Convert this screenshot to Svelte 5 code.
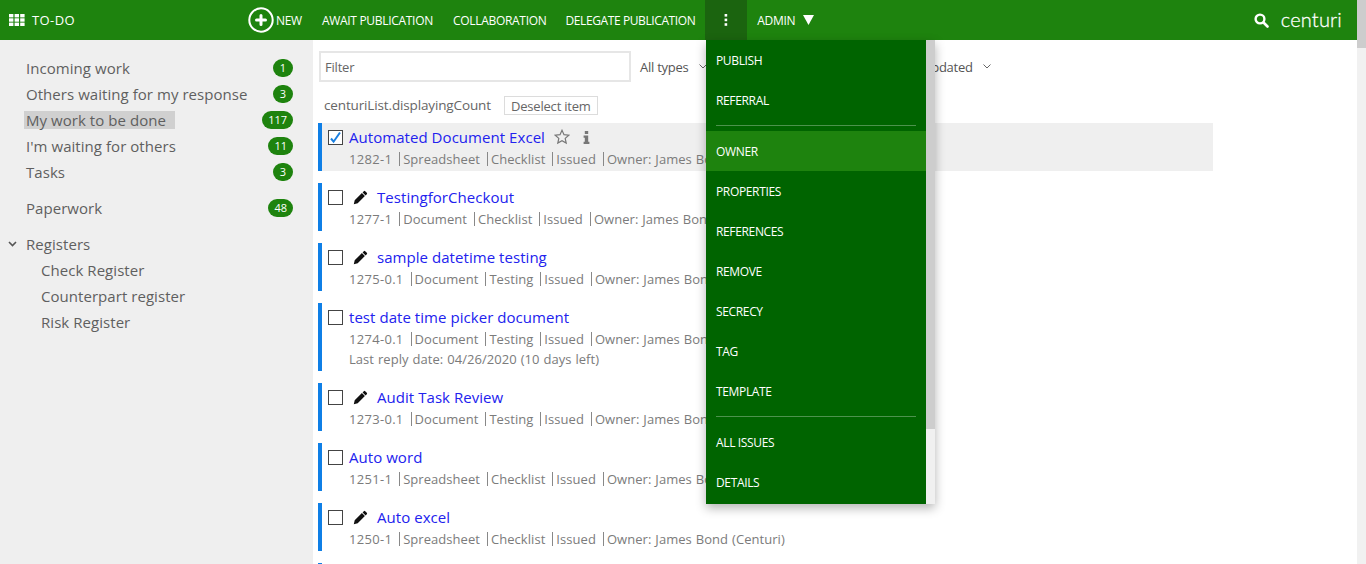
<script>
  const navTop = [
    { label: "Incoming work", count: 1 },
    { label: "Others waiting for my response", count: 3 },
    { label: "My work to be done", count: 117, active: true },
    { label: "I'm waiting for others", count: 11 },
    { label: "Tasks", count: 3 }
  ];
  const registers = ["Check Register", "Counterpart register", "Risk Register"];

  const items = [
    { title: "Automated Document Excel", id: "1282-1", type: "Spreadsheet", kind: "Checklist", selected: true },
    { title: "TestingforCheckout", id: "1277-1", type: "Document", kind: "Checklist", edit: true },
    { title: "sample datetime testing", id: "1275-0.1", type: "Document", kind: "Testing", edit: true },
    { title: "test date time picker document", id: "1274-0.1", type: "Document", kind: "Testing", reply: "Last reply date: 04/26/2020 (10 days left)" },
    { title: "Audit Task Review", id: "1273-0.1", type: "Document", kind: "Testing", edit: true },
    { title: "Auto word", id: "1251-1", type: "Spreadsheet", kind: "Checklist" },
    { title: "Auto excel", id: "1250-1", type: "Spreadsheet", kind: "Checklist", edit: true }
  ];

  const menuGroups = [
    ["PUBLISH", "REFERRAL"],
    ["OWNER", "PROPERTIES", "REFERENCES", "REMOVE", "SECRECY", "TAG", "TEMPLATE"],
    ["ALL ISSUES", "DETAILS"]
  ];
</script>

<div class="page">
  <header class="topbar">
    <div class="brand">
      <svg class="grid-icon" width="16" height="12" viewBox="0 0 16 12" fill="#fff">
        <rect x="0" y="0" width="4.4" height="3.4" /><rect x="5.6" y="0" width="4.4" height="3.4" /><rect x="11.2" y="0" width="4.4" height="3.4" />
        <rect x="0" y="4.3" width="4.4" height="3.4" /><rect x="5.6" y="4.3" width="4.4" height="3.4" /><rect x="11.2" y="4.3" width="4.4" height="3.4" />
        <rect x="0" y="8.6" width="4.4" height="3.4" /><rect x="5.6" y="8.6" width="4.4" height="3.4" /><rect x="11.2" y="8.6" width="4.4" height="3.4" />
      </svg>
      <span>TO-DO</span>
    </div>
    <div class="new">
      <svg width="26" height="26" viewBox="0 0 26 26">
        <circle cx="13" cy="13" r="11.7" fill="none" stroke="#fff" stroke-width="2" />
        <path d="M13 8.500v9M8.500 13h9" stroke="#fff" stroke-width="3" stroke-linecap="round" />
      </svg>
      <span>NEW</span>
    </div>
    <span class="nav-link">AWAIT PUBLICATION</span>
    <span class="nav-link">COLLABORATION</span>
    <span class="nav-link tight">DELEGATE PUBLICATION</span>
    <div class="kebab">
      <svg width="4" height="12" viewBox="0 0 4 12" fill="#fff"><rect x="0.6" y="0" width="2.6" height="2.6" /><rect x="0.6" y="4.6" width="2.6" height="2.6" /><rect x="0.6" y="9.2" width="2.6" height="2.6" /></svg>
    </div>
    <div class="admin">
      <span>ADMIN</span>
      <svg width="11" height="10" viewBox="0 0 11 10" fill="#fff"><path d="M0 0h11L5.500 10z" /></svg>
    </div>
    <div class="logo-area">
      <svg width="15" height="15" viewBox="0 0 15 15" fill="none" stroke="#fff">
        <circle cx="6" cy="6" r="4.4" stroke-width="2.4" />
        <path d="M9.500 9.500l4 4" stroke-width="2.6" stroke-linecap="round" />
      </svg>
      <span class="logo">centuri</span>
    </div>
  </header>

  <div class="body">
    <aside class="sidebar">
      <ul class="nav">
        {#each navTop as n}
          <li class="nav-row">
            <span class="nav-label" class:active={n.active}>{n.label}</span>
            <span class="badge">{n.count}</span>
          </li>
        {/each}
      </ul>
      <div class="nav-row paperwork">
        <span class="nav-label">Paperwork</span>
        <span class="badge">48</span>
      </div>
      <div class="nav-row registers">
        <svg class="chev" width="9" height="6" viewBox="0 0 9 6" fill="none" stroke="#555" stroke-width="1.6"><path d="M1 1l3.500 3.500L8 1" /></svg>
        <span class="nav-label">Registers</span>
      </div>
      {#each registers as r}
        <div class="nav-row sub"><span class="nav-label">{r}</span></div>
      {/each}
    </aside>

    <main class="content">
      <div class="toolbar">
        <input class="filter" type="text" placeholder="Filter" />
        <span class="select">All types
          <svg width="8" height="5" viewBox="0 0 8 5" fill="none" stroke="#666"><path d="M.5.5L4 4 7.500.5" /></svg>
        </span>
        <span class="select sort">Last updated
          <svg width="8" height="5" viewBox="0 0 8 5" fill="none" stroke="#666"><path d="M.5.5L4 4 7.500.5" /></svg>
        </span>
      </div>
      <div class="count-row">
        <span>centuriList.displayingCount</span>
        <button class="deselect">Deselect item</button>
      </div>

      <div class="list">
        {#each items as item}
          <div class="item" class:selected={item.selected}>
            <div class="title-row">
              <span class="check">
                {#if item.selected}
                  <svg width="13" height="13" viewBox="0 0 13 13" fill="none" stroke="#1a7fe0" stroke-width="2"><path d="M2 7.500l2.600 3.200L11 1.500" /></svg>
                {/if}
              </span>
              {#if item.edit}
                <svg class="pencil" width="15" height="15" viewBox="0 0 15 15" fill="#111">
                  <path d="M10.800 1.200a1 1 0 0 1 1.400 0l1.600 1.600a1 1 0 0 1 0 1.400l-1.200 1.200-3-3zM8.900 3.100l3 3-7.200 7.200L.8 14.200l.9-3.900z" />
                </svg>
              {/if}
              <span class="title">{item.title}</span>
              {#if item.selected}
                <svg class="star" width="16" height="16" viewBox="0 0 16 16" fill="none" stroke="#777" stroke-width="1.2"><path d="M8 1.300l2 4.400 4.800.5-3.600 3.200 1 4.700L8 11.700l-4.200 2.400 1-4.700L1.200 6.200l4.800-.5z" /></svg>
                <svg class="info" width="7" height="13" viewBox="0 0 7 13" fill="#777"><rect x="1.800" y="0" width="3.400" height="3" /><path d="M.6 4.600h4.600v6.200h1.200V13H.6v-2.200h1.200V6.800H.6z" /></svg>
              {/if}
            </div>
            <div class="meta">
              <span class="id">{item.id}</span><span class="sep">{item.type}</span><span class="sep">{item.kind}</span><span class="sep">Issued</span><span class="sep">Owner: James Bond (Centuri)</span>
            </div>
            {#if item.reply}
              <div class="meta">{item.reply}</div>
            {/if}
          </div>
        {/each}
        <div class="item"></div>
      </div>
    </main>
  </div>

  <div class="menu">
    <div class="menu-list">
      {#each menuGroups as group, g}
        {#if g > 0}<div class="divider"></div>{/if}
        {#each group as entry}
          <div class="menu-item" class:hover={entry === "OWNER"}>{entry}</div>
        {/each}
      {/each}
    </div>
    <div class="menu-scroll"><div class="menu-thumb"></div></div>
  </div>

  <div class="page-scroll"><div class="page-thumb"></div></div>
</div>

<style>
  :global(body) {
    margin: 0;
    background: #fff;
    font-family: "Open Sans", "Noto Sans", sans-serif;
  }
  .page {
    position: relative;
    height: 564px;
    overflow: hidden;
  }
  .topbar {
    display: flex;
    align-items: center;
    height: 40px;
    background: #1e830e;
    color: #fff;
    font-size: 12px;
    font-weight: 500;
    letter-spacing: -0.3px;
  }
  .brand {
    display: flex;
    align-items: center;
    width: 248px;
    padding-left: 9px;
    box-sizing: border-box;
    gap: 7px;
    font-size: 13px;
    letter-spacing: 0.4px;
  }
  .new {
    display: flex;
    align-items: center;
    gap: 2px;
  }
  .nav-link {
    margin-left: 20px;
  }
  .nav-link.tight {
    margin-left: 19px;
    letter-spacing: -0.4px;
  }
  .kebab {
    display: flex;
    align-items: center;
    justify-content: center;
    width: 42px;
    height: 40px;
    margin-left: 10px;
    background: #1b640f;
  }
  .admin {
    display: flex;
    align-items: center;
    gap: 8px;
    margin-left: 10px;
  }
  .logo-area {
    display: flex;
    align-items: center;
    gap: 12px;
    margin-left: auto;
    margin-right: 24px;
  }
  .logo {
    font-family: Lato, sans-serif;
    font-size: 20px;
    font-weight: 300;
    letter-spacing: 0.2px;
    line-height: 20px;
    padding-bottom: 3px;
    -webkit-text-stroke: 0.3px #fff;
  }
  .body {
    display: flex;
    height: 524px;
  }
  .sidebar {
    width: 313px;
    flex: none;
    background: #efefef;
    padding-top: 15px;
    box-sizing: border-box;
    color: #5f5f5f;
    font-size: 15px;
    letter-spacing: 0.05px;
  }
  .nav {
    list-style: none;
    margin: 0;
    padding: 0;
  }
  .nav-row {
    display: flex;
    align-items: center;
    justify-content: space-between;
    height: 26px;
    padding-left: 26px;
    padding-right: 20px;
  }
  .nav-label {
    line-height: 18px;
  }
  .nav-label.active {
    background: #d0d0d0;
    margin-left: -2px;
    padding: 0 9px 0 2px;
  }
  .badge {
    min-width: 20px;
    height: 18px;
    box-sizing: border-box;
    text-align: center;
    border-radius: 9px;
    background: #1e830e;
    color: #fff;
    font-size: 11px;
    line-height: 18px;
    letter-spacing: 0;
  }
  .nav li:nth-child(3) .badge,
  .nav li:nth-child(4) .badge,
  .paperwork .badge {
    padding: 0 6px;
  }
  .paperwork {
    margin-top: 10px;
  }
  .registers {
    position: relative;
    margin-top: 10px;
    justify-content: flex-start;
  }
  .chev {
    position: absolute;
    left: 8px;
    top: 10px;
  }
  .sub {
    padding-left: 41px;
  }
  .content {
    flex: 1;
    min-width: 0;
    padding: 11px 0 0 5px;
    color: #666;
    font-size: 13px;
  }
  .toolbar {
    display: flex;
    align-items: center;
    height: 31px;
  }
  .filter {
    width: 312px;
    height: 31px;
    box-sizing: border-box;
    margin-left: 1px;
    padding: 0 4px;
    border: 2px solid #e6e6e6;
    border-radius: 0;
    outline: none;
    font: inherit;
    letter-spacing: -0.2px;
    background: #fff;
  }
  .filter::placeholder {
    color: #666;
  }
  .select {
    display: inline-flex;
    align-items: center;
    gap: 10px;
    margin-left: 9px;
    color: #555;
    letter-spacing: -0.25px;
  }
  .select.sort {
    margin-left: 190px;
  }
  .count-row {
    display: flex;
    align-items: center;
    gap: 13px;
    height: 20px;
    margin-top: 13px;
    padding-left: 6px;
    font-size: 13.5px;
    letter-spacing: -0.14px;
  }
  .deselect {
    height: 19px;
    width: 94px;
    padding: 0;
    border: 1px solid #dcdcdc;
    background: #fff;
    color: #666;
    font: inherit;
    font-size: 13px;
    letter-spacing: -0.2px;
  }
  .list {
    display: flex;
    flex-direction: column;
    gap: 12px;
    margin-top: 8px;
    width: 895px;
  }
  .item {
    min-height: 48px;
    box-sizing: border-box;
    border-left: 4px solid #0f7fe6;
    padding: 1px 0 2px 6px;
  }
  .item.selected {
    background: #efefef;
  }
  .title-row {
    display: flex;
    align-items: center;
    height: 26px;
    margin-bottom: -1px;
  }
  .check {
    display: inline-flex;
    align-items: center;
    justify-content: center;
    width: 15px;
    height: 15px;
    box-sizing: border-box;
    border: 1px solid #444;
    background: #fff;
    flex: none;
    margin-right: 6px;
  }
  .pencil {
    margin: 0 9px 0 4px;
  }
  .title {
    color: #2222ee;
    font-size: 15px;
    letter-spacing: 0.05px;
  }
  .star {
    margin-left: 9px;
  }
  .info {
    margin-left: 13px;
  }
  .meta {
    display: flex;
    font-size: 13px;
    line-height: 20px;
    color: #7b7b7b;
    letter-spacing: 0.05px;
    word-spacing: 0.5px;
    padding-left: 21px;
  }
  .id {
    letter-spacing: 0.3px;
  }
  .sep {
    margin-left: 7px;
    padding-left: 3px;
    border-left: 1px solid #888;
    line-height: 14px;
    align-self: center;
  }
  .menu {
    position: absolute;
    left: 706px;
    top: 40px;
    display: flex;
    width: 229px;
    height: 464px;
    box-shadow: 0 4px 10px rgba(0, 0, 0, 0.3);
  }
  .menu-list {
    width: 220px;
    background: #006400;
    color: #fff;
    font-size: 12px;
    font-weight: 500;
    letter-spacing: -0.35px;
  }
  .menu-item {
    display: flex;
    align-items: center;
    height: 40px;
    padding-left: 10px;
  }
  .menu-item.hover {
    background: #1e830e;
  }
  .divider {
    height: 1px;
    margin: 5px 10px;
    background: rgba(255, 255, 255, 0.3);
  }
  .menu-scroll {
    width: 9px;
    background: #f0f0f0;
  }
  .menu-thumb {
    height: 389px;
    background: #cdcdcd;
  }
  .page-scroll {
    position: absolute;
    right: 0;
    top: 0;
    width: 9px;
    height: 564px;
    background: #f1f1f1;
  }
  .page-thumb {
    height: 48px;
    background: #cdcdcd;
  }
</style>
